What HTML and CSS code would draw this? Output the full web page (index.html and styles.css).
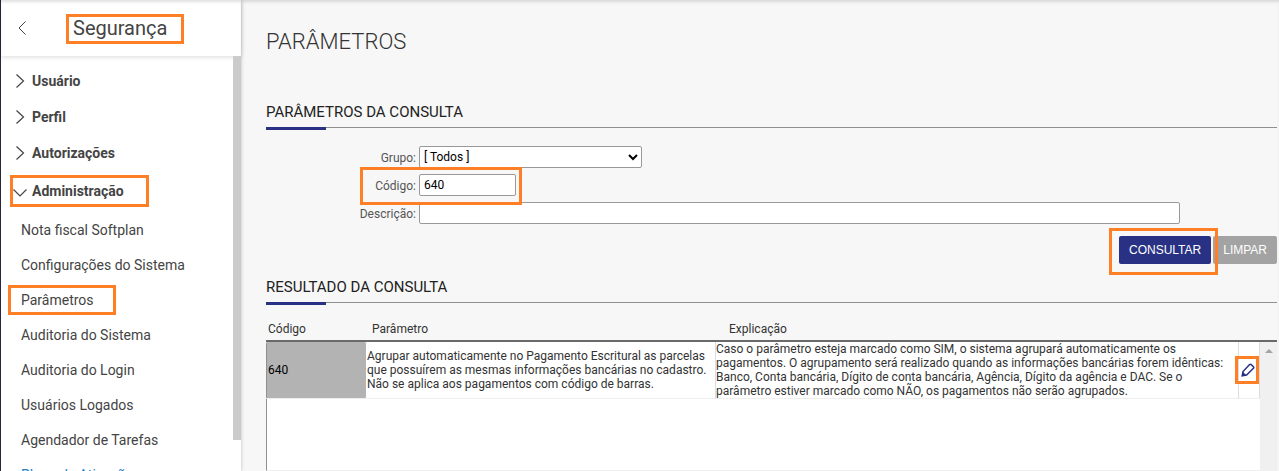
FILE: index.html
```html
<!DOCTYPE html>
<html lang="pt-BR">
<head>
  <meta charset="UTF-8" />
  <meta name="viewport" content="width=device-width, initial-scale=1.0"/>
  <title>Parâmetros | Segurança</title>
  <link rel="stylesheet" href="styles.css">
</head>
<body>

  <div class="layout">

    <!-- Menu lateral -->
    <aside class="sidebar">
      <div class="sidebar-header">
        <button type="button" class="back-button" aria-label="Voltar">
          <svg width="8" height="14" viewBox="0 0 8 14"><path d="M7.5 0.5 L1 7 L7.5 13.5"/></svg>
        </button>
        <h2 class="sidebar-title"><span class="marked mark-title">Segurança</span></h2>
      </div>

      <div class="sidebar-body">
        <nav class="menu">
          <a href="#" class="menu-group">
            <svg class="arrow" width="14" height="14" viewBox="0 0 14 14"><path d="M3.5 0.5 L10.5 7 L3.5 13.5"/></svg>
            <span>Usuário</span>
          </a>
          <a href="#" class="menu-group">
            <svg class="arrow" width="14" height="14" viewBox="0 0 14 14"><path d="M3.5 0.5 L10.5 7 L3.5 13.5"/></svg>
            <span>Perfil</span>
          </a>
          <a href="#" class="menu-group">
            <svg class="arrow" width="14" height="14" viewBox="0 0 14 14"><path d="M3.5 0.5 L10.5 7 L3.5 13.5"/></svg>
            <span>Autorizações</span>
          </a>
          <a href="#" class="menu-group open marked mark-group">
            <svg class="arrow" width="14" height="14" viewBox="0 0 14 14"><path d="M0.5 5.5 L7 12 L13.5 5.5"/></svg>
            <span>Administração</span>
          </a>
          <div class="submenu">
            <a href="#">Nota fiscal Softplan</a>
            <a href="#">Configurações do Sistema</a>
            <a href="#"><span class="marked mark-item">Parâmetros</span></a>
            <a href="#">Auditoria do Sistema</a>
            <a href="#">Auditoria do Login</a>
            <a href="#">Usuários Logados</a>
            <a href="#">Agendador de Tarefas</a>
            <a href="#" class="active">Plano de Ativação</a>
          </div>
        </nav>
        <div class="menu-scroll"></div>
      </div>
    </aside>

    <!-- Conteúdo -->
    <main class="content">
      <h1>Parâmetros</h1>

      <h3 class="section-title">Parâmetros da Consulta</h3>
      <form class="search-form">
        <div class="field">
          <label for="grupo">Grupo:</label>
          <select id="grupo" class="input-grupo">
            <option>[ Todos ]</option>
          </select>
        </div>
        <div class="field marked mark-field">
          <label for="codigo">Código:</label>
          <input type="text" id="codigo" class="input-codigo" value="640" />
        </div>
        <div class="field">
          <label for="descricao">Descrição:</label>
          <input type="text" id="descricao" class="input-descricao" />
        </div>
        <div class="buttons">
          <span class="marked mark-button"><button type="button" class="btn btn-primary">Consultar</button></span>
          <button type="reset" class="btn">Limpar</button>
        </div>
      </form>

      <h3 class="section-title">Resultado da Consulta</h3>
      <div class="result">
        <table>
          <colgroup>
            <col class="col-codigo" />
            <col class="col-parametro" />
            <col />
            <col class="col-editar" />
            <col class="col-scroll" />
          </colgroup>
          <thead>
            <tr>
              <th>Código</th>
              <th>Parâmetro</th>
              <th>Explicação</th>
              <th></th>
              <th></th>
            </tr>
          </thead>
          <tbody>
            <tr>
              <td class="selected">640</td>
              <td>Agrupar automaticamente no Pagamento Escritural as parcelas que possuírem as mesmas informações bancárias no cadastro. Não se aplica aos pagamentos com código de barras.</td>
              <td>Caso o parâmetro esteja marcado como SIM, o sistema agrupará automaticamente os pagamentos. O agrupamento será realizado quando as informações bancárias forem idênticas: Banco, Conta bancária, Dígito de conta bancária, Agência, Dígito da agência e DAC. Se o parâmetro estiver marcado como NÃO, os pagamentos não serão agrupados.</td>
              <td class="cell-editar">
                <button type="button" class="edit-button marked mark-edit" aria-label="Editar">
                  <svg width="14" height="14" viewBox="0 0 14 14"><path d="M1.2 12.8 L2 8.6 L8.6 1.6 Q9.4 0.8 10.2 1.6 L12.4 3.7 Q13.2 4.5 12.4 5.3 L5.6 12 Z"/><path class="tip" d="M0.8 13.2 L1.8 8.8 L5.4 12.2 Z"/></svg>
                </button>
              </td>
              <td class="cell-scroll">
                <svg width="8" height="4" viewBox="0 0 8 4"><path d="M0 4 L4 0 L8 4 Z"/></svg>
              </td>
            </tr>
            <tr class="empty">
              <td colspan="4"></td>
              <td class="cell-scroll"></td>
            </tr>
          </tbody>
        </table>
      </div>
    </main>

  </div>

</body>
</html>
```

FILE: styles.css
```css
* {
  box-sizing: border-box;
}
body {
  margin: 0;
  background: #f7f7f7;
  font-family: Roboto, "Liberation Sans", sans-serif;
  font-size: 12px;
  color: #333;
}
h1, h2, h3 {
  margin: 0;
  font-weight: 400;
}
a {
  color: inherit;
  text-decoration: none;
}
button {
  cursor: pointer;
}
.layout {
  display: flex;
  height: 100vh;
  overflow: hidden;
}

/* Orange frames around the steps */
.marked {
  position: relative;
}
.marked::after {
  content: "";
  position: absolute;
  box-sizing: border-box;
  border: 3px solid #ff7f27;
  pointer-events: none;
}
.mark-title::after {
  inset: -2px -17px -4px -7px;
}
.mark-group::after {
  inset: 4px 92px 4px 9px;
}
.mark-item::after {
  inset: -7px -22px -7px -13px;
}
.mark-field::after {
  left: 94px;
  width: 162px;
  top: -7px;
  bottom: -9px;
}
.mark-button::after {
  inset: -8px -7px -11px -10px;
}
.mark-edit::after {
  inset: -5px -2px -5px -4px;
}

/* Sidebar */
.sidebar {
  display: flex;
  flex-direction: column;
  flex: 0 0 241px;
  border-left: 1px solid #262738;
  background: #fff;
  box-shadow: 0 0 4px rgba(0,0,0,0.2);
}
.sidebar-header {
  display: flex;
  align-items: center;
  flex: 0 0 56px;
  padding-left: 17px;
  box-shadow: 0 1px 5px rgba(0,0,0,0.15), inset 0 3px 3px -1px rgba(0,0,0,0.12);
  z-index: 1;
}
.back-button {
  display: flex;
  width: 8px;
  padding: 0;
  border: none;
  background: none;
}
.back-button svg, .arrow {
  flex: none;
  fill: none;
  stroke: #444;
}
.sidebar-title {
  margin-left: 47px;
  font-size: 20px;
  line-height: 24px;
  color: #444;
}
.sidebar-body {
  display: flex;
  flex: 1;
  min-height: 0;
}
.menu {
  flex: 1;
  padding-top: 7px;
  overflow: hidden;
  font-size: 14px;
  color: #444;
}
.menu-scroll {
  width: 8px;
  height: 384px;
  margin-left: -8px;
  background: #cbcbcb;
  z-index: 1;
}
.menu-group {
  display: flex;
  align-items: center;
  gap: 5px;
  height: 36px;
  padding-left: 12px;
  font-weight: 700;
}
.menu-group .arrow {
  stroke-width: 1.2;
}
.menu-group.open {
  height: 40px;
}
.submenu {
  padding-top: 2px;
}
.submenu a {
  display: block;
  padding: 9px 0 9px 20px;
  line-height: 17px;
}
.submenu .active {
  color: #1f7fc4;
}

/* Content */
.content {
  display: flex;
  flex-direction: column;
  flex: 1;
  padding: 29px 2px 0 25px;
  box-shadow: inset 0 3px 3px -1px rgba(0,0,0,0.12);
}
h1 {
  margin-bottom: 48px;
  font-size: 22px;
  font-weight: 300;
  line-height: 26px;
  text-transform: uppercase;
}
.section-title {
  position: relative;
  padding-bottom: 5px;
  border-bottom: 1px solid #8f8f8f;
  font-size: 15px;
  line-height: 19px;
  color: #222;
  text-transform: uppercase;
}
.section-title::after {
  content: "";
  position: absolute;
  left: 0;
  bottom: -3px;
  width: 60px;
  height: 3px;
  background: #283184;
}

/* Search form */
.search-form {
  display: flex;
  flex-direction: column;
  gap: 6px;
  padding: 18px 0 14px;
}
.field {
  display: flex;
  align-items: center;
  gap: 3px;
  height: 22px;
}
.field label {
  width: 150px;
  padding-top: 2px;
  text-align: right;
  color: #555;
}
.field input, .field select {
  height: 22px;
  padding: 0 4px;
  border: 1px solid #999;
  border-radius: 2px;
  background: #fff;
  font: inherit;
  color: #000;
}
.field .input-grupo {
  width: 223px;
  padding: 0;
}
.input-codigo {
  width: 97px;
}
.input-descricao {
  width: 761px;
}
.buttons {
  display: flex;
  justify-content: flex-end;
  gap: 2px;
  padding-top: 6px;
}
.btn {
  height: 28px;
  padding: 0 10px;
  border: none;
  border-radius: 2px;
  background: #a3a3a3;
  color: #fff;
  font: 12px "Liberation Sans", Arial, sans-serif;
  text-transform: uppercase;
}
.btn-primary {
  background: #283184;
}

/* Result table */
.result {
  display: flex;
  flex: 1;
  padding-top: 17px;
}
table {
  width: 100%;
  table-layout: fixed;
  border-collapse: separate;
  border-spacing: 0;
  line-height: 14px;
}
.col-codigo {
  width: 101px;
}
.col-parametro {
  width: 349px;
}
.col-editar {
  width: 21px;
}
.col-scroll {
  width: 17px;
}
th {
  height: 22px;
  padding: 0 0 2px 5px;
  border-bottom: 2px solid #6a6a6c;
  font-weight: 400;
  text-align: left;
}
th:first-child {
  padding-left: 2px;
}
th:nth-child(3) {
  padding-left: 13px;
}
td {
  height: 57px;
  padding: 0;
  border-right: 1px solid #ddd;
  border-bottom: 1px solid #eee;
  background: #fff;
}
td:first-child {
  border-left: 1px solid #8f8f8f;
}
td.selected {
  padding-left: 1px;
  border-right-color: #fff;
  border-radius: 2px;
  background: #b3b3b3;
  color: #000;
}
.empty td {
  height: auto;
  border-right: none;
}
td.cell-scroll {
  border: none;
  background: #f0f0f0;
  text-align: center;
  vertical-align: top;
}
.cell-scroll svg {
  fill: #a3a3a3;
}
.edit-button {
  display: flex;
  padding: 2px;
  border: none;
  background: none;
}
.edit-button svg {
  fill: none;
  stroke: #283184;
  stroke-width: 1.5;
}
.edit-button .tip {
  fill: #283184;
  stroke: none;
}
```
